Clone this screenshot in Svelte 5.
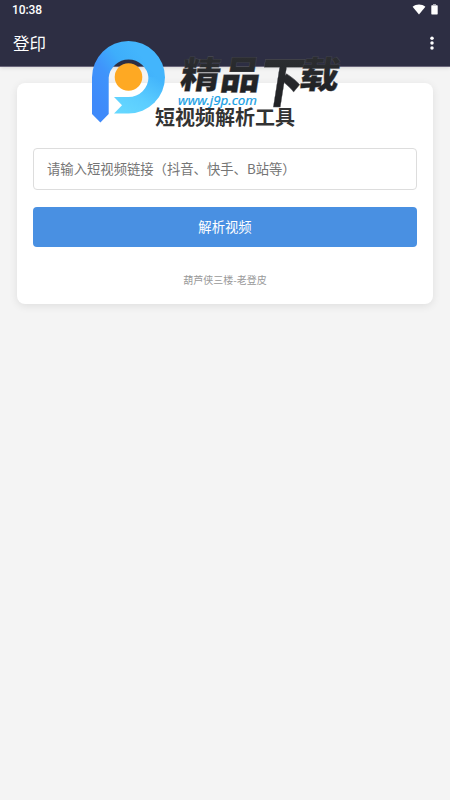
<script lang="ts">
  let url = '';

  // glyphs of the brand wordmark, each placed and stretched on its own
  const wordmark = [
    { char: '精', x: 179, y: 88, sx: 1.02, sy: 0.94 },
    { char: '品', x: 219, y: 88.5, sx: 1.03, sy: 1 },
    { char: '下', x: 256.5, y: 102, sx: 1.13, sy: 1.4 },
    { char: '载', x: 298, y: 88, sx: 1.02, sy: 0.94 }
  ];
</script>

<div class="app">
  <header>
    <div class="status-bar">
      <span class="time">10:38</span>
      <div class="status-icons">
        <svg width="14" height="11" viewBox="0 0 14 11">
          <path d="M.6 2.7C4.2-.3 9.8-.3 13.4 2.7L7 10.6z" fill="#fff" />
        </svg>
        <svg width="7" height="11" viewBox="0 0 7 11">
          <path d="M.9 1.2h5.2q.6 0 .6.6v8q0 .6-.6.6H.9q-.6 0-.6-.6v-8q0-.6.6-.6z" fill="#fff" />
          <path d="M2 0h3v1.2H2z" fill="#a5a6b0" />
        </svg>
      </div>
    </div>
    <div class="toolbar">
      <span class="app-name">登印</span>
      <button class="menu" aria-label="Menu">
        <svg width="4" height="14" viewBox="0 0 4 14" fill="#fff">
          <circle cx="2" cy="2.2" r="1.75" />
          <circle cx="2" cy="7.1" r="1.75" />
          <circle cx="2" cy="12" r="1.75" />
        </svg>
      </button>
    </div>
  </header>

  <main>
    <div class="card">
      <h1>短视频解析工具</h1>
      <input type="text" placeholder="请输入短视频链接（抖音、快手、B站等）" bind:value={url} />
      <button class="btn-parse">解析视频</button>
      <p class="credit">葫芦侠三楼-老登皮</p>
    </div>
  </main>

  <svg class="brand" width="450" height="130" viewBox="0 0 450 130">
    <defs>
      <linearGradient id="ring" x1="0" y1="0.7" x2="0.65" y2="0.15">
        <stop offset="0" stop-color="#3f8afa" />
        <stop offset="0.4" stop-color="#3f94fb" />
        <stop offset="0.7" stop-color="#3eaefb" />
        <stop offset="1" stop-color="#43b5fc" />
      </linearGradient>
      <linearGradient id="tail" x1="0" y1="1" x2="0.8" y2="0">
        <stop offset="0" stop-color="#67d9ff" />
        <stop offset="0.5" stop-color="#5bcdff" />
        <stop offset="1" stop-color="#43b5fc" />
      </linearGradient>
      <linearGradient id="ink" x1="0" y1="0" x2="0" y2="1">
        <stop offset="0" stop-color="#303235" />
        <stop offset="1" stop-color="#1e1f22" />
      </linearGradient>
    </defs>
    <path
      d="M92 114V77.5A36.5 36.5 0 0 1 165 77.5H148.5A20 20 0 0 0 108.7 77.5V114L100.4 122.5z"
      fill="url(#ring)"
    />
    <path d="M148.5 77A20 20 0 0 1 128.5 97H114L122 105.2 114 113.5H128.5A36.5 36.5 0 0 0 165 77z" fill="url(#tail)" />
    <circle cx="128.5" cy="77" r="13.8" fill="#fea923" />
    <g class="wordmark">
      {#each wordmark as glyph}
        <text transform={`translate(${glyph.x} ${glyph.y}) skewX(-9) scale(${glyph.sx} ${glyph.sy})`}>{glyph.char}</text>
      {/each}
    </g>
    <text class="site" x="178" y="105" textLength="79" lengthAdjust="spacingAndGlyphs">www.j9p.com</text>
  </svg>
</div>

<style>
  :global(body) {
    margin: 0;
    background: #f4f4f4;
  }

  .app {
    position: relative;
    min-height: 800px;
    background: #f4f4f4;
    font-family: 'Noto Sans CJK SC', sans-serif;
  }

  header {
    height: 67px;
    box-sizing: border-box;
    background: #2d2e43;
    border-bottom: 1px solid #69657a;
    box-shadow: 0 1px 4px rgba(0, 0, 0, 0.12);
    color: #fff;
  }

  .status-bar {
    display: flex;
    align-items: center;
    justify-content: space-between;
    height: 20px;
    padding: 0 12px;
  }

  .time {
    font: 500 12px/20px Roboto, sans-serif;
    letter-spacing: -0.1px;
  }

  .status-icons {
    display: flex;
    align-items: center;
    gap: 5px;
    margin-top: -2px;
  }

  .toolbar {
    display: flex;
    align-items: center;
    justify-content: space-between;
    height: 46px;
    padding: 0 16px 0 13px;
  }

  .app-name {
    font-size: 16.5px;
    line-height: 24px;
  }

  .menu {
    display: flex;
    padding: 0;
    border: none;
    background: none;
  }

  main {
    padding: 16px 17px 0;
  }

  .card {
    height: 221px;
    box-sizing: border-box;
    padding: 18px 16px 0;
    background: #fff;
    border-radius: 8px;
    box-shadow: 0 2px 8px rgba(0, 0, 0, 0.09);
  }

  h1 {
    margin: 0 0 15px;
    font-size: 20px;
    font-weight: 700;
    line-height: 32px;
    text-align: center;
    color: #333;
  }

  input {
    display: block;
    width: 100%;
    height: 42px;
    box-sizing: border-box;
    padding: 0 13px 2px;
    border: 1px solid #ddd;
    border-radius: 4px;
    background: #fff;
    font-family: inherit;
    font-size: 13.33px;
  }

  input::placeholder {
    color: #757575;
  }

  .btn-parse {
    display: block;
    width: 100%;
    height: 40px;
    margin-top: 17px;
    padding: 0 0 2px;
    border: none;
    border-radius: 4px;
    background: #4990e2;
    color: #fff;
    font-family: inherit;
    font-size: 13.33px;
  }

  .credit {
    margin: 25px 0 0;
    font-size: 10px;
    line-height: 16px;
    text-align: center;
    color: #999;
  }

  .brand {
    position: absolute;
    top: 0;
    left: 0;
    pointer-events: none;
  }

  .wordmark text {
    font-size: 39px;
    font-weight: 900;
    fill: url(#ink);
    stroke: #55565c;
    stroke-width: 0.3px;
  }

  .site {
    font-family: 'Noto Sans', 'Open Sans', sans-serif;
    font-size: 13px;
    font-style: italic;
    fill: #199fe5;
    stroke: #199fe5;
    stroke-width: 0.2px;
  }
</style>
